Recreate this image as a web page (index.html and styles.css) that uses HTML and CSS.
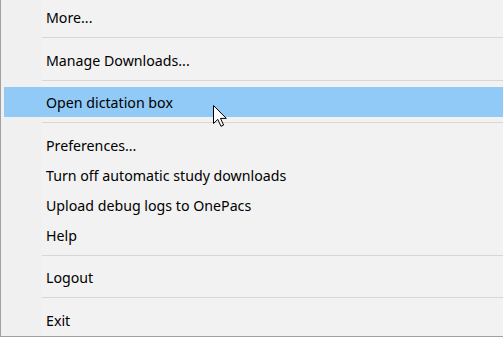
FILE: index.html
```html
<!DOCTYPE html>
<html lang="en">

<head>
    <meta charset="UTF-8">
    <meta name="viewport" content="width=device-width, initial-scale=1.0">
    <link rel="stylesheet" href="styles.css">
    <title>Menu</title>
</head>

<body>
    <div class="menu">
        <ul>
            <li class="item">More...</li>
            <li class="sep"></li>
            <li class="item">Manage Downloads...</li>
            <li class="sep"></li>
            <li class="item hover">Open dictation box</li>
            <li class="sep"></li>
            <li class="item">Preferences...</li>
            <li class="item">Turn off automatic study downloads</li>
            <li class="item">Upload debug logs to OnePacs</li>
            <li class="item">Help</li>
            <li class="sep"></li>
            <li class="item">Logout</li>
            <li class="sep"></li>
            <li class="item">Exit</li>
        </ul>
        <svg class="cursor" width="16" height="24" viewBox="0 0 16 24">
            <path d="M1.5 1.5 L1.5 19.5 L5.8 15.4 L9 22.3 L11.6 21.1 L8.5 14.4 L14.3 14.4 Z" fill="#fff" stroke="#000" stroke-width="1" stroke-linejoin="miter"/>
        </svg>
    </div>
</body>

</html>
```

FILE: styles.css
```css
* {
    margin: 0;
    padding: 0;
    box-sizing: border-box;
}

ul,
li {
    list-style: none;
}

body {
    width: 503px;
    height: 337px;
    overflow: hidden;
    font-family: "Noto Sans", "Open Sans", sans-serif;
    font-size: 14.2px;
    color: #000;
}

.menu {
    position: relative;
    height: 337px;
    padding-top: 2px;
    border-left: 1px solid #a0a0a0;
    border-bottom: 1px solid #a0a0a0;
    background: linear-gradient(to right, #f0f0f0 40px, #f2f2f2 40px);
}

.item {
    height: 30px;
    line-height: 31px;
    margin-left: 3px;
    padding-left: 42px;
    white-space: nowrap;
}

.hover {
    background-color: #91c9f7;
}

.sep {
    height: 12.5px;
    margin-left: 41px;
    padding-top: 5px;
}

.sep::after {
    content: "";
    display: block;
    height: 1px;
    background-color: #d7d7d7;
}

.cursor {
    position: absolute;
    left: 211px;
    top: 104px;
}
```
